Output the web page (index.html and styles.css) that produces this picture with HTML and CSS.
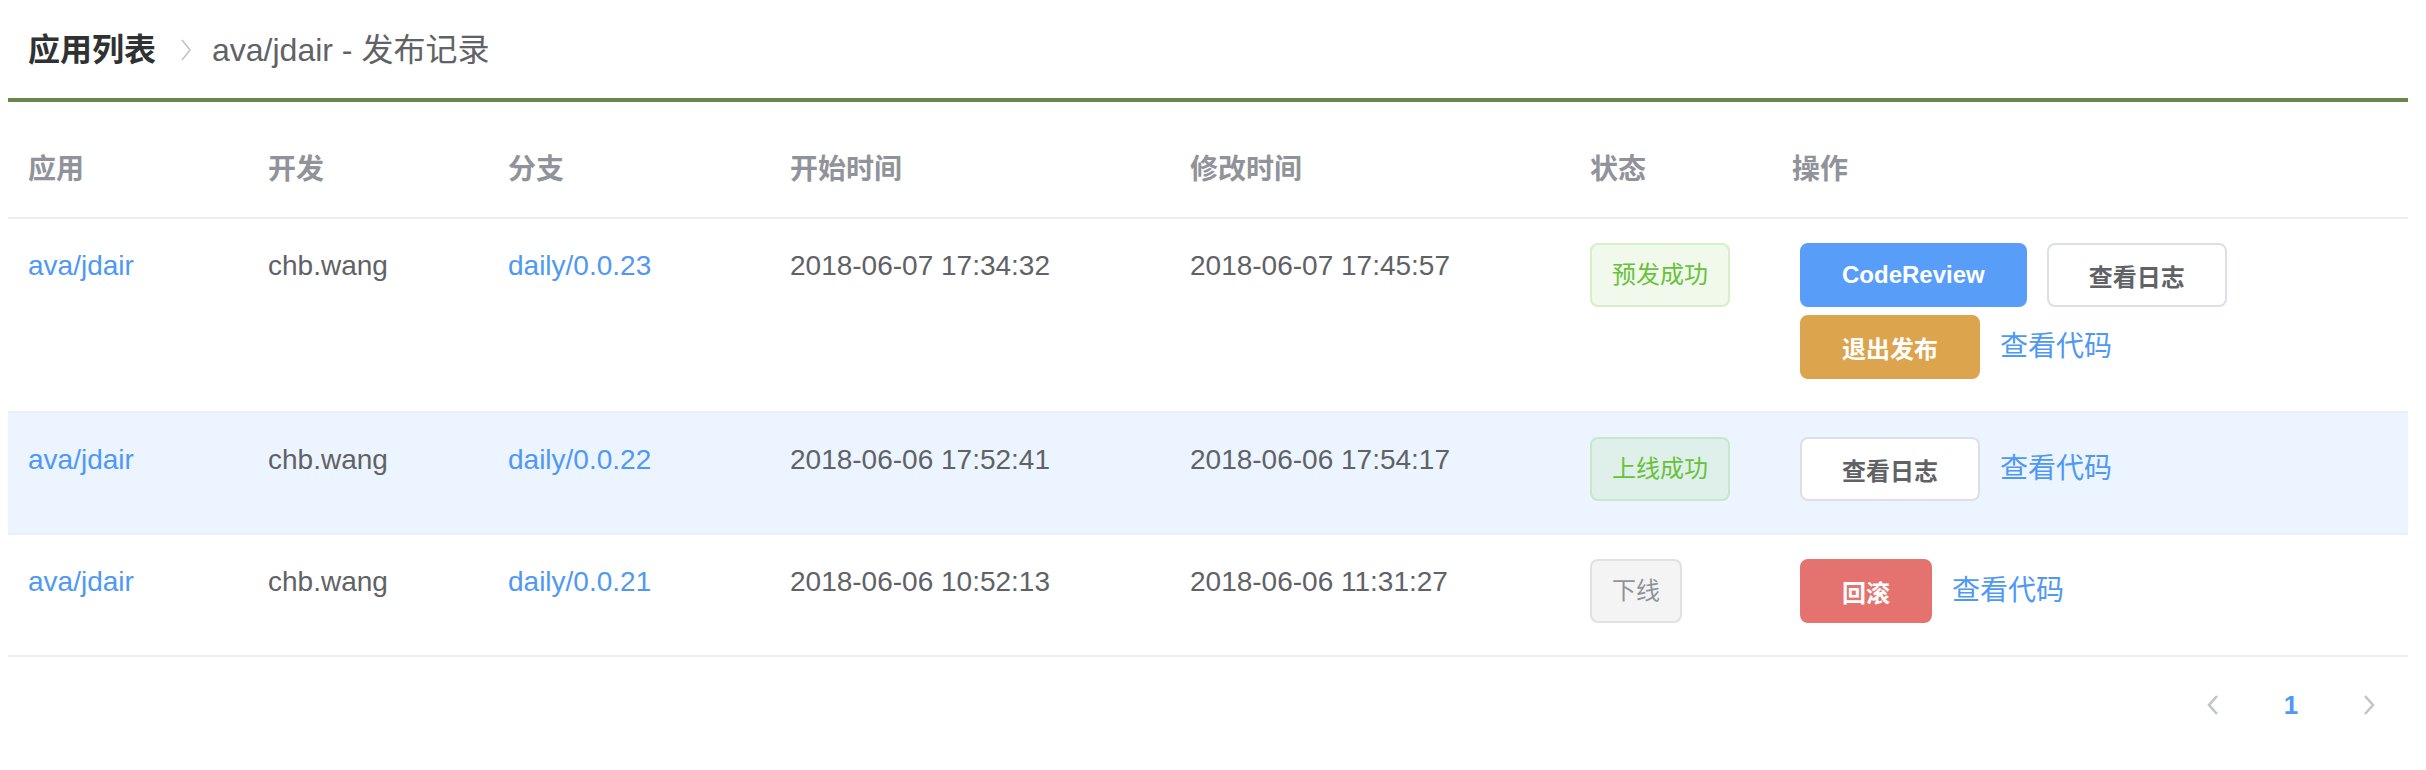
FILE: index.html
```html
<!DOCTYPE html>
<html lang="zh-CN">
<head>
<meta charset="utf-8">
<title>发布记录</title>
<link rel="stylesheet" href="styles.css">
</head>
<body>
<div class="topbar">
  <span class="crumb crumb-root">应用列表</span>
  <span class="crumb-sep"><svg width="12" height="24" viewBox="0 0 12 24"><polyline points="2,2 10,12 2,22" fill="none" stroke="#c0c4cc" stroke-width="1.6"/></svg></span>
  <span class="crumb crumb-current">ava/jdair - 发布记录</span>
</div>

<table class="records">
  <colgroup>
    <col class="c-app"><col class="c-dev"><col class="c-branch"><col class="c-start"><col class="c-mod"><col class="c-status"><col class="c-ops">
  </colgroup>
  <thead>
    <tr>
      <th>应用</th><th>开发</th><th>分支</th><th>开始时间</th><th>修改时间</th><th>状态</th><th>操作</th>
    </tr>
  </thead>
  <tbody>
    <tr>
      <td><a class="link">ava/jdair</a></td>
      <td>chb.wang</td>
      <td><a class="link">daily/0.0.23</a></td>
      <td>2018-06-07 17:34:32</td>
      <td>2018-06-07 17:45:57</td>
      <td><span class="tag tag-success">预发成功</span></td>
      <td>
        <div class="ops">
          <div class="ops-line"><button class="btn btn-primary">CodeReview</button><button class="btn btn-default">查看日志</button></div>
          <div class="ops-line"><button class="btn btn-warning">退出发布</button><a class="link op-link">查看代码</a></div>
        </div>
      </td>
    </tr>
    <tr class="row-hover">
      <td><a class="link">ava/jdair</a></td>
      <td>chb.wang</td>
      <td><a class="link">daily/0.0.22</a></td>
      <td>2018-06-06 17:52:41</td>
      <td>2018-06-06 17:54:17</td>
      <td><span class="tag tag-success">上线成功</span></td>
      <td>
        <div class="ops">
          <div class="ops-line"><button class="btn btn-default">查看日志</button><a class="link op-link">查看代码</a></div>
        </div>
      </td>
    </tr>
    <tr>
      <td><a class="link">ava/jdair</a></td>
      <td>chb.wang</td>
      <td><a class="link">daily/0.0.21</a></td>
      <td>2018-06-06 10:52:13</td>
      <td>2018-06-06 11:31:27</td>
      <td><span class="tag tag-info">下线</span></td>
      <td>
        <div class="ops">
          <div class="ops-line"><button class="btn btn-danger">回滚</button><a class="link op-link">查看代码</a></div>
        </div>
      </td>
    </tr>
  </tbody>
</table>

<div class="pagination">
  <span class="pg-btn"><svg width="12" height="22" viewBox="0 0 12 22"><polyline points="10,2 2,11 10,20" fill="none" stroke="#c0c4cc" stroke-width="2.6"/></svg></span>
  <span class="pg-btn pg-active">1</span>
  <span class="pg-btn"><svg width="12" height="22" viewBox="0 0 12 22"><polyline points="2,2 10,11 2,20" fill="none" stroke="#c0c4cc" stroke-width="2.6"/></svg></span>
</div>
</body>
</html>
```

FILE: styles.css
```css
* { box-sizing: border-box; }

body {
  margin: 8px 18px 8px 8px;
  background: #ffffff;
  font-family: "Liberation Sans", "Noto Sans CJK SC", sans-serif;
  color: #606266;
}

.topbar {
  height: 94px;
  padding: 0 0 6px 20px;
  border-bottom: 4px solid #6a8649;
  display: flex;
  align-items: center;
}

.crumb { font-size: 32px; line-height: 40px; }
.crumb-root { font-weight: 700; color: #303133; }
.crumb-current { color: #606266; }
.crumb-sep { display: flex; align-items: center; margin: 0 20px 0 24px; }

.records {
  width: 2400px;
  margin-top: 21px;
  border-collapse: collapse;
  table-layout: fixed;
  font-size: 28px;
}

.c-app { width: 240px; }
.c-dev { width: 240px; }
.c-branch { width: 282px; }
.c-start { width: 400px; }
.c-mod { width: 400px; }
.c-status { width: 202px; }

.records th,
.records td {
  padding: 24px 20px;
  text-align: left;
  vertical-align: top;
  line-height: 46px;
  border-bottom: 2px solid #ebeef5;
}

.records th {
  color: #909399;
  font-weight: 700;
}

.records td { color: #606266; }

.row-hover td { background: #ecf5ff; }

.link {
  color: #4f98f3;
  text-decoration: none;
  cursor: pointer;
}

.tag {
  display: inline-block;
  height: 64px;
  line-height: 60px;
  padding: 0 20px;
  font-size: 24px;
  border-radius: 8px;
  border: 2px solid;
  white-space: nowrap;
}

.tag-success {
  background: rgba(103, 194, 58, 0.1);
  border-color: rgba(103, 194, 58, 0.2);
  color: #67c23a;
}

.tag-info {
  background: rgba(144, 147, 153, 0.1);
  border-color: rgba(144, 147, 153, 0.2);
  color: #909399;
}

.ops {
  display: flex;
  flex-direction: column;
  gap: 8px;
  padding: 0 0 8px 8px;
}

.ops-line {
  display: flex;
  align-items: center;
  gap: 20px;
}

.btn {
  height: 64px;
  padding: 0 40px;
  font-family: "Liberation Sans", "Noto Sans CJK SC", sans-serif;
  font-size: 24px;
  font-weight: 700;
  border: 2px solid;
  border-radius: 8px;
  white-space: nowrap;
  cursor: pointer;
}

.btn-primary { background: #589ef8; border-color: #589ef8; color: #ffffff; }
.btn-default { background: #ffffff; border-color: #dcdfe6; color: #606266; }
.btn-warning { background: #dba44d; border-color: #dba44d; color: #ffffff; }
.btn-danger  { background: #e4736f; border-color: #e4736f; color: #ffffff; }

.op-link { font-size: 28px; line-height: 46px; }

.pagination {
  margin-top: 20px;
  width: 2400px;
  display: flex;
  justify-content: flex-end;
}

.pg-btn {
  width: 78px;
  height: 56px;
  display: flex;
  align-items: center;
  justify-content: center;
  font-size: 26px;
  font-weight: 700;
  color: #303133;
}

.pg-active { color: #4f98f3; }
```
